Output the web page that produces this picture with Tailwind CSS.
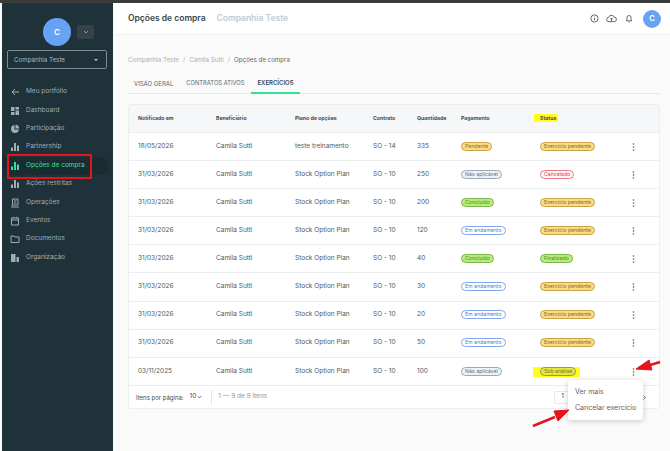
<!DOCTYPE html>
<html lang="en">
<head>
    <meta charset="UTF-8">
    <meta name="viewport" content="width=device-width, initial-scale=1.0">
    <title>Opções de compra</title>
    <script src="https://cdn.jsdelivr.net/npm/@tailwindcss/browser@4"></script>
</head>
<body class="relative h-[451px] w-[670px] overflow-hidden bg-[#fafafa] font-['Inter','Liberation_Sans',sans-serif] text-[#3d4a52]">
    <div class="h-[3px] bg-[#3b3b3b]"></div>
    <div class="flex h-[448px]">
        <!-- sidebar -->
        <aside class="ml-[2px] w-[111px] shrink-0 bg-[#1f3239] text-[6.5px] text-[#a0adb2]">
            <div class="mt-[14px] flex h-[30px] items-center pl-[41px]">
                <div class="flex h-[28px] w-[28px] items-center justify-center rounded-full bg-[#66a3f5] text-[8px] font-semibold text-white">C</div>
                <div class="ml-[6px] flex h-[14px] w-[17px] items-center justify-center rounded-[3px] bg-[#354349]">
                    <svg width="6" height="4" viewBox="0 0 6 4" fill="none" stroke="#aab4b8" stroke-width="0.8"><path d="M1 1l2 2 2-2"/></svg>
                </div>
            </div>
            <div class="ml-[5px] mt-[3px] flex h-[19px] w-[100px] items-center justify-between rounded-[2px] border border-[#7d8b90] pl-[6px] pr-[8px] text-[6.2px] text-[#aeb9bd]">
                <span>Companhia Teste</span>
                <span class="h-0 w-0 border-x-[2px] border-t-[2px] border-x-transparent border-t-[#c5cdd0]"></span>
            </div>
            <nav class="mt-[14px] flex flex-col">
                <a class="flex h-[18.4px] items-center pl-[7px]">
                    <svg class="w-[12px]" width="10" height="10" viewBox="0 0 10 10" fill="none" stroke="#a0adb2" stroke-width="1"><path d="M9 5H2M5 2L2 5l3 3"/></svg>
                    <span class="ml-[5px]">Meu portfólio</span>
                </a>
                <a class="flex h-[18.4px] items-center pl-[7px]">
                    <svg class="w-[12px]" width="10" height="10" viewBox="0 0 10 10" fill="#a0adb2"><path d="M1 1h3.500v4H1zM5.500 1H9v2.500H5.500zM5.500 4.500H9V9H5.500zM1 6h3.500v3H1z"/></svg>
                    <span class="ml-[5px]">Dashboard</span>
                </a>
                <a class="flex h-[18.4px] items-center pl-[7px]">
                    <svg class="w-[12px]" width="10" height="10" viewBox="0 0 10 10" fill="#a0adb2"><path d="M4.500 1a4 4 0 1 0 4.500 4.500H4.500zM5.500 .8V4.500h3.700A4 4 0 0 0 5.500 .8z"/></svg>
                    <span class="ml-[5px]">Participação</span>
                </a>
                <a class="flex h-[18.4px] items-center pl-[7px]">
                    <svg class="w-[12px]" width="10" height="10" viewBox="0 0 10 10" fill="#a0adb2"><path d="M1 5.500h2V9H1zM4 1h2v8H4zM7 3.500h2V9H7z"/></svg>
                    <span class="ml-[5px]">Partnership</span>
                </a>
                <a class="mr-[4px] flex h-[18.4px] items-center rounded-r-full bg-[#1a2b32] pl-[7px] text-[#2fe39a]">
                    <svg class="w-[12px]" width="10" height="10" viewBox="0 0 10 10" fill="#2fe39a"><path d="M1 5.500h2V9H1zM4 1h2v8H4zM7 3.500h2V9H7z"/></svg>
                    <span class="ml-[5px]">Opções de compra</span>
                </a>
                <a class="flex h-[18.4px] items-center pl-[7px]">
                    <svg class="w-[12px]" width="10" height="10" viewBox="0 0 10 10" fill="#a0adb2"><path d="M1 5.500h2V9H1zM4 1h2v8H4zM7 3.500h2V9H7z"/></svg>
                    <span class="ml-[5px]">Ações restritas</span>
                </a>
                <a class="flex h-[18.4px] items-center pl-[7px]">
                    <svg class="w-[12px]" width="10" height="10" viewBox="0 0 10 10" fill="none" stroke="#a0adb2" stroke-width="1"><path d="M2.500 1h5.500v6H2.500zM1.500 9h7.500M2 7.500v1.500M4 3h2.500M4 5h2.500"/></svg>
                    <span class="ml-[5px]">Operações</span>
                </a>
                <a class="flex h-[18.4px] items-center pl-[7px]">
                    <svg class="w-[12px]" width="10" height="10" viewBox="0 0 10 10" fill="none" stroke="#a0adb2" stroke-width="1"><path d="M1.500 2h7v7h-7zM1.500 4h7M3 .8V2M7 .8V2"/></svg>
                    <span class="ml-[5px]">Eventos</span>
                </a>
                <a class="flex h-[18.4px] items-center pl-[7px]">
                    <svg class="w-[12px]" width="10" height="10" viewBox="0 0 10 10" fill="none" stroke="#a0adb2" stroke-width="1"><path d="M1 2h3l1 1h4v5.500H1z"/></svg>
                    <span class="ml-[5px]">Documentos</span>
                </a>
                <a class="flex h-[18.4px] items-center pl-[7px]">
                    <svg class="w-[12px]" width="10" height="10" viewBox="0 0 10 10" fill="#a0adb2"><path d="M1 1h4.500v8H1zM6.500 4H9v5H6.500z"/></svg>
                    <span class="ml-[5px]">Organização</span>
                </a>
            </nav>
        </aside>

        <main class="min-w-0 flex-1 pl-[1px]">
            <!-- header -->
            <header class="flex h-[32px] items-center justify-between border-b border-[#f0f0f0] bg-white pl-[14px] pr-[9px]">
                <div class="flex items-baseline gap-[11px] text-[8.5px] font-semibold">
                    <span class="text-[#37474f]">Opções de compra</span>
                    <span class="text-[#bccbd6]">Companhia Teste</span>
                </div>
                <div class="flex items-center">
                    <svg width="9" height="9" viewBox="0 0 10 10" fill="none" stroke="#3d4a52" stroke-width="0.9"><circle cx="5" cy="5" r="4"/><path d="M5 4.500v2.500M5 2.800v.8"/></svg>
                    <svg class="ml-[7px]" width="11" height="9" viewBox="0 0 12 10" fill="none" stroke="#3d4a52" stroke-width="0.9"><path d="M3 8.500a2.300 2.300 0 0 1-.3-4.600A3.300 3.300 0 0 1 9 3.500a2.500 2.500 0 0 1 0 5zM6 8V4.500M4.700 5.800L6 4.500l1.300 1.300"/></svg>
                    <svg class="ml-[8px]" width="8" height="9" viewBox="0 0 8 10" fill="none" stroke="#3d4a52" stroke-width="0.9"><path d="M1 7.500h6L6.300 6.500V4a2.300 2.300 0 0 0-4.600 0v2.500zM3.300 9h1.400"/></svg>
                    <div class="ml-[10px] flex h-[18px] w-[18px] items-center justify-center rounded-full bg-[#66a3f5] text-[7.5px] font-semibold text-white">C</div>
                </div>
            </header>

            <div class="pl-[14px] pr-[10px]">
                <p class="mt-[20px] flex gap-[4px] text-[6.2px] leading-[10px] text-[#a8b0b5]"><span>Companhia Teste</span><span>/</span><span>Camila Sutti</span><span>/</span><span class="text-[#5b666d]">Opções de compra</span></p>

                <!-- tabs -->
                <div class="mt-[7px] flex h-[22px] border-b border-[#e7e9eb] text-[6px] text-[#5b666d]">
                    <span class="flex items-center pl-[6px] pr-[6.5px] pt-[1px]">VISÃO GERAL</span>
                    <span class="flex items-center px-[6.5px] pt-[1px] text-[5.8px]">CONTRATOS ATIVOS</span>
                    <span class="flex h-[22px] items-center border-b-[2px] border-[#2fe39a] px-[6.5px] pt-[1px] font-semibold text-[#3d4a52]">EXERCÍCIOS</span>
                </div>

                <!-- table -->
                <div class="mt-[10px] h-[305px] rounded-[3px] border border-[#eceef0] bg-white">
                    <table class="w-full table-fixed border-collapse text-left text-[6.5px] text-[#4d5960]">
                        <colgroup>
                            <col class="w-[87px]"><col class="w-[79px]"><col class="w-[78px]"><col class="w-[44px]"><col class="w-[44px]"><col class="w-[79px]"><col class="w-[88px]"><col>
                        </colgroup>
                        <thead>
                            <tr class="h-[27.5px] bg-[#f6f7f8] text-[5.2px] font-bold text-[#3d4a52]">
                                <th class="pl-[9px]">Notificado em</th><th>Beneficiário</th><th>Plano de opções</th><th>Contrato</th><th>Quantidade</th><th>Pagamento</th>
                                <th class="font-bold"><span class="-ml-[6px] bg-[#ffff1a] py-[1px] pl-[6px] pr-[2px]">Status</span></th><th></th>
                            </tr>
                        </thead>
                        <tbody id="rows"></tbody>
                    </table>
                    <div class="flex h-[23px] items-center border-t border-[#eceef0] pl-[7px] text-[6px]">
                        <span>Itens por página:</span>
                        <span class="ml-[6px] flex items-center gap-[1px] text-[6.5px]">10 <svg width="5" height="4" viewBox="0 0 6 4" fill="none" stroke="#3d4a52" stroke-width="1"><path d="M1 1l2 2 2-2"/></svg></span>
                        <span class="ml-[9px] h-[15px] w-px bg-[#e3e5e7]"></span>
                        <span class="ml-[6px] text-[6.5px] text-[#8d969c]">1 — 9 de 9 itens</span>
                        <span class="ml-auto flex h-[13px] w-[17px] items-center justify-center rounded-[2px] border border-[#e6e8ea] text-[6.5px]">1</span>
                        <svg class="ml-[72px] mr-[13px]" width="3" height="5" viewBox="0 0 3 5" fill="none" stroke="#4d5960" stroke-width="0.8"><path d="M.5.500l2 2-2 2"/></svg>
                    </div>
                </div>
            </div>
        </main>
    </div>

    <!-- row menu -->
    <div class="absolute left-[568px] top-[380px] w-[75px] rounded-[3px] bg-white py-[4px] pl-[7px] text-[7px] leading-[16px] text-[#5b666d] shadow-[0_1px_6px_rgba(0,0,0,0.2)]">
        <div>Ver mais</div>
        <div class="whitespace-nowrap">Cancelar exercício</div>
    </div>

    <!-- annotations -->
    <div class="absolute left-[7px] top-[154px] h-[25px] w-[85px] border-[2.5px] border-[#e3141b]"></div>
    <svg class="absolute left-0 top-0" width="670" height="451" fill="#e3141b" stroke="#e3141b">
        <path d="M660 362l-16 5" stroke-width="2.5" fill="none"/>
        <path d="M636 369l13-9 3 10z"/>
        <path d="M533 426l22-9" stroke-width="2.5" fill="none"/>
        <path d="M569 410l-15 1 4 10z"/>
    </svg>

    <script>
        const badges = {
            pendente: 'border-[#c9a24a] bg-[#fbdc85] text-[#8a6d1f]',
            na: 'border-[#9aa7b8] bg-[#eef1f5] text-[#66727e]',
            ok: 'border-[#79b84a] bg-[#b9ec7c] text-[#4f8a22]',
            run: 'border-[#7fa9ef] bg-white text-[#4d7fd0]',
            cancel: 'border-[#ef7d8a] bg-[#fff5f6] text-[#d9404f]',
            analise: 'border-[#8a9a5a] bg-[#e6e83a] text-[#6f7a2a]'
        };
        const rows = [
            ['18/05/2026', 'teste treinamento', 'SO - 14', '335', ['Pendente', 'pendente'], ['Exercício pendente', 'pendente']],
            ['31/03/2026', 'Stock Option Plan', 'SO - 10', '250', ['Não aplicável', 'na'], ['Cancelado', 'cancel']],
            ['31/03/2026', 'Stock Option Plan', 'SO - 10', '200', ['Concluído', 'ok'], ['Exercício pendente', 'pendente']],
            ['31/03/2026', 'Stock Option Plan', 'SO - 10', '120', ['Em andamento', 'run'], ['Exercício pendente', 'pendente']],
            ['31/03/2026', 'Stock Option Plan', 'SO - 10', '40', ['Concluído', 'ok'], ['Finalizado', 'ok']],
            ['31/03/2026', 'Stock Option Plan', 'SO - 10', '30', ['Em andamento', 'run'], ['Exercício pendente', 'pendente']],
            ['31/03/2026', 'Stock Option Plan', 'SO - 10', '20', ['Em andamento', 'run'], ['Exercício pendente', 'pendente']],
            ['31/03/2026', 'Stock Option Plan', 'SO - 10', '50', ['Em andamento', 'run'], ['Exercício pendente', 'pendente']],
            ['03/11/2025', 'Stock Option Plan', 'SO - 10', '100', ['Não aplicável', 'na'], ['Sob análise', 'analise']]
        ];
        const badge = ([label, kind]) => `<span class="inline-block rounded-full border px-[3px] text-[5.2px] leading-[7px] ${badges[kind]}">${label}</span>`;
        const dots = '<svg width="3" height="8" viewBox="0 0 3 8" fill="#4d5960"><circle cx="1.5" cy="1" r=".8"/><circle cx="1.5" cy="4" r=".8"/><circle cx="1.5" cy="7" r=".8"/></svg>';
        document.getElementById('rows').innerHTML = rows.map((r, i) => `
            <tr class="h-[28.1px] border-t border-[#eceef0]">
                <td class="pl-[9px]">${r[0]}</td><td>Camila Sutti</td><td>${r[1]}</td><td>${r[2]}</td><td>${r[3]}</td>
                <td>${badge(r[4])}</td>
                <td class="relative">${i === 8 ? '<span class="absolute left-[-7px] top-[9px] h-[10px] w-[47px] bg-[#ffff1a]"></span><span class="relative">' + badge(r[5]) + '</span>' : badge(r[5])}</td>
                <td class="pl-[4px]">${dots}</td>
            </tr>`).join('');
    </script>
</body>
</html>
